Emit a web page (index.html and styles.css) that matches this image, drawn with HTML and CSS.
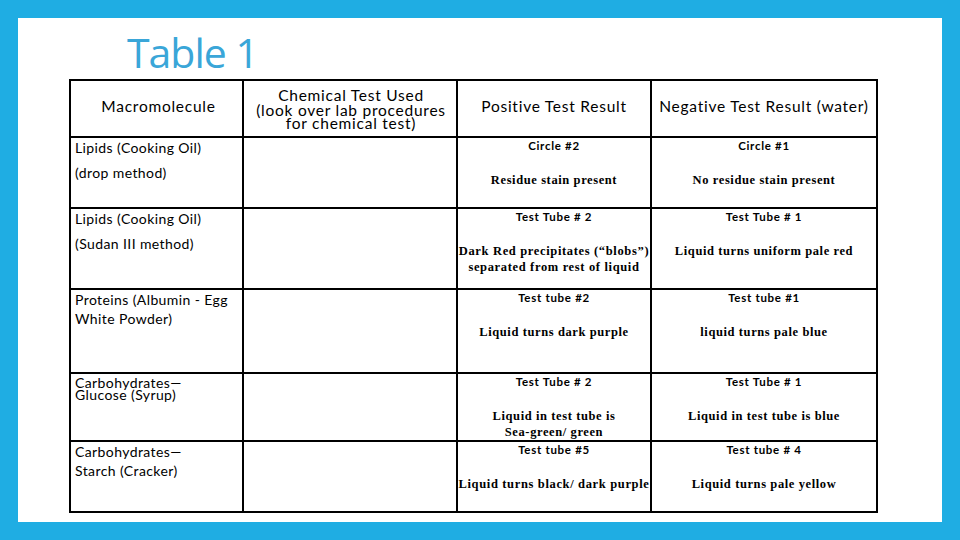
FILE: index.html
```html
<!DOCTYPE html>
<html>
<head>
<meta charset="utf-8">
<link rel="stylesheet" href="styles.css">
</head>
<body>
<div class="frame">
  <div class="slide">
    <h1 class="title">Table 1</h1>
    <div class="table">
      <div class="cell head mm"><span class="h1">Macromolecule</span></div>
      <div class="cell head chem"><span class="l1">Chemical Test Used</span><span class="l2">(look over lab procedures</span><span class="l3">for chemical test)</span></div>
      <div class="cell head"><span class="h1">Positive Test Result</span></div>
      <div class="cell head"><span class="h1">Negative Test Result (water)</span></div>

      <div class="cell mol lipids"><p>Lipids (Cooking Oil)</p><p>(drop method)</p></div>
      <div class="cell"></div>
      <div class="cell res"><div class="lab">Circle #2</div><div class="txt">Residue stain present</div></div>
      <div class="cell res"><div class="lab">Circle #1</div><div class="txt">No residue stain present</div></div>

      <div class="cell mol lipids"><p>Lipids (Cooking Oil)</p><p>(Sudan III method)</p></div>
      <div class="cell"></div>
      <div class="cell res"><div class="lab">Test Tube # 2</div><div class="txt wide">Dark Red precipitates (“blobs”)<br>separated from rest of liquid</div></div>
      <div class="cell res"><div class="lab">Test Tube # 1</div><div class="txt">Liquid turns uniform pale red</div></div>

      <div class="cell mol">Proteins (Albumin - Egg<br>White Powder)</div>
      <div class="cell"></div>
      <div class="cell res"><div class="lab">Test tube #2</div><div class="txt">Liquid turns dark purple</div></div>
      <div class="cell res"><div class="lab">Test tube #1</div><div class="txt">liquid turns pale blue</div></div>

      <div class="cell mol tight">Carbohydrates—<br>Glucose (Syrup)</div>
      <div class="cell"></div>
      <div class="cell res"><div class="lab">Test Tube # 2</div><div class="txt">Liquid in test tube is<br>Sea-green/ green</div></div>
      <div class="cell res"><div class="lab">Test Tube # 1</div><div class="txt">Liquid in test tube is blue</div></div>

      <div class="cell mol">Carbohydrates—<br>Starch (Cracker)</div>
      <div class="cell"></div>
      <div class="cell res"><div class="lab">Test tube #5</div><div class="txt wide">Liquid turns black/ dark purple</div></div>
      <div class="cell res"><div class="lab">Test tube # 4</div><div class="txt">Liquid turns pale yellow</div></div>
    </div>
  </div>
</div>
</body>
</html>
```

FILE: styles.css
```css
html, body {
  margin: 0;
  padding: 0;
}
body {
  width: 960px;
  height: 540px;
  overflow: hidden;
  background: #1fade3;
}
.frame {
  padding: 18px;
  height: 504px;
}
.slide {
  background: #ffffff;
  width: 924px;
  height: 504px;
  overflow: hidden;
}
.title {
  margin: 0;
  padding: 11px 0 0 109px;
  height: 50px;
  font-family: "Open Sans", sans-serif;
  font-weight: 400;
  font-size: 41px;
  line-height: 46px;
  letter-spacing: -1px;
  color: #3aa6d8;
}
.table {
  margin-left: 51px;
  width: 809px;
  display: grid;
  grid-template-columns: 171px 212px 192px 224px;
  grid-template-rows: 55px 69px 79px 82px 66px 69px;
  gap: 2px;
  padding: 2px;
  box-sizing: border-box;
  background: #000;
}
.cell {
  background: #fff;
  overflow: visible;
  color: #000;
}
.head {
  display: flex;
  align-items: center;
  justify-content: center;
  font-family: "Lato", sans-serif;
  font-size: 15.5px;
  line-height: 16px;
  padding-bottom: 6px;
  text-align: center;
  letter-spacing: 0.75px;
  white-space: nowrap;
}
.head.mm {
  padding-left: 4px;
}
.head.chem {
  flex-direction: column;
  padding-bottom: 2px;
  padding-left: 2px;
}
.chem .l1 { line-height: 16px; }
.chem .l2 { line-height: 14px; }
.chem .l3 { line-height: 12px; }
.mol {
  font-family: "Lato", sans-serif;
  font-size: 14px;
  line-height: 19px;
  padding: 0 0 0 4px;
  letter-spacing: 0.4px;
  white-space: nowrap;
}
.mol p {
  margin: 0 0 6px 0;
}
.mol.tight {
  line-height: 12px;
  padding-top: 3px;
}
.res {
  text-align: center;
  padding-top: 0;
}
.lab {
  font-family: "Lato", sans-serif;
  font-weight: 700;
  font-size: 11.5px;
  line-height: 16px;
  height: 16px;
  margin-bottom: 18px;
  letter-spacing: 0.7px;
}
.txt {
  font-family: "Liberation Serif", serif;
  font-weight: 700;
  font-size: 12.5px;
  line-height: 16px;
  letter-spacing: 0.6px;
  white-space: nowrap;
}
.txt.wide {
  letter-spacing: 0.65px;
  margin: 0 -6px;
}
```
